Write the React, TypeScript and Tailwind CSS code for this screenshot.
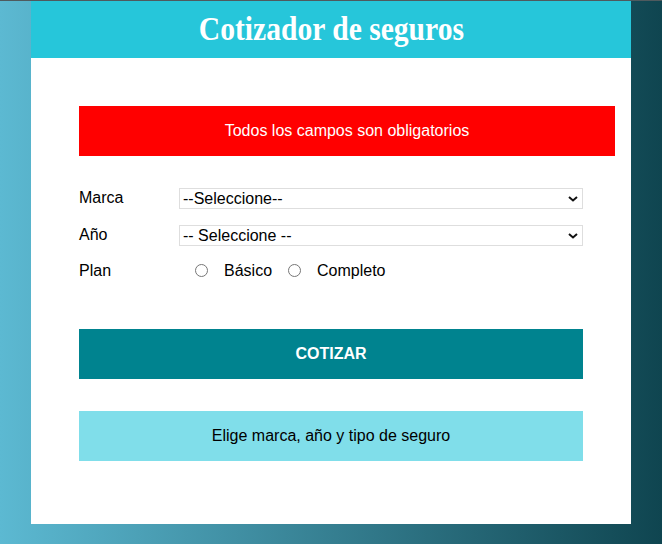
import React from "react";

function Chevron() {
  return (
    <svg
      className="pointer-events-none absolute right-[5px] top-1/2 -translate-y-1/2"
      width="10"
      height="7"
      viewBox="0 0 10 7"
    >
      <path d="M1 1.5 L5 5 L9 1.5" fill="none" stroke="#111" strokeWidth="2" />
    </svg>
  );
}

function FakeSelect({ value }: { value: string }) {
  return (
    <div className="relative flex-1">
      <select
        className="block w-full h-[21px] appearance-none border border-[#dedede] bg-white pl-[3px] pr-5 text-[16px] leading-[19px] text-black outline-none rounded-none"
        defaultValue={value}
      >
        <option value={value}>{value}</option>
      </select>
      <Chevron />
    </div>
  );
}

export default function App() {
  return (
    <div
      className="min-h-[544px] w-full bg-[linear-gradient(to_right,#5cb9d2,#0f4550)] border-t border-[#4f5a5e] pb-[20px]"
      style={{ fontFamily: '"Liberation Sans", Arial, sans-serif' }}
    >
      <div className="mx-auto w-[600px] bg-white">
        <div className="flex h-[57px] items-center justify-center bg-[#26c6da]">
          <h1
            className="inline-block text-[34px] font-bold text-white leading-none pb-[1px] scale-x-[0.87]"
            style={{ fontFamily: '"Liberation Serif", serif' }}
          >
            Cotizador de seguros
          </h1>
        </div>
        <div className="px-[48px] pt-[48px] pb-[63px]">
          <div className="flex h-[50px] w-[536px] items-center justify-center bg-[#ff0000] text-[16px] text-white">
            Todos los campos son obligatorios
          </div>
          <div className="mt-[32px] flex items-center">
            <label className="w-[100px] text-[16px] text-black leading-[19px] -mt-[2px]">Marca</label>
            <FakeSelect value="--Seleccione--" />
          </div>
          <div className="mt-[16px] flex items-center">
            <label className="w-[100px] text-[16px] text-black leading-[19px] -mt-[2px]">Año</label>
            <FakeSelect value="-- Seleccione --" />
          </div>
          <div className="mt-[15px] flex items-center">
            <label className="w-[100px] text-[16px] text-black leading-[19px]">Plan</label>
            <div className="flex items-center pl-[16px] text-[16px] text-black leading-[19px]">
              <input type="radio" name="plan" className="m-0 h-[13px] w-[13px]" />
              <span className="ml-[16px]">Básico</span>
              <input type="radio" name="plan" className="m-0 ml-[16px] h-[13px] w-[13px]" />
              <span className="ml-[16px]">Completo</span>
            </div>
          </div>
          <button className="mt-[49px] flex h-[50px] w-full items-center justify-center bg-[#00838f] text-[16px] font-bold uppercase text-white">
            Cotizar
          </button>
          <div className="mt-[32px] flex h-[50px] w-full items-center justify-center bg-[#80deea] text-[16px] text-black">
            Elige marca, año y tipo de seguro
          </div>
        </div>
      </div>
    </div>
  );
}
